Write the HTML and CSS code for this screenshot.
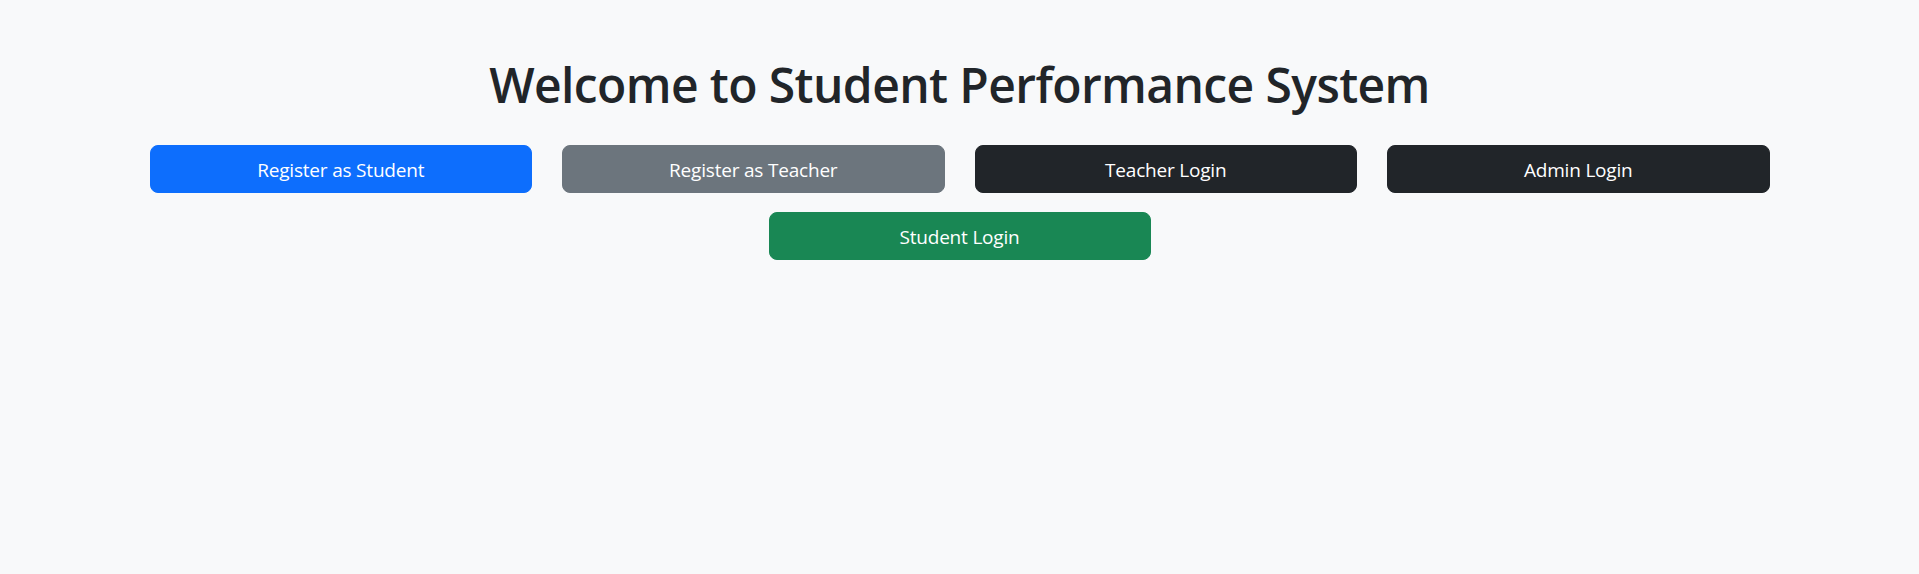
FILE: index.html
```html
<!DOCTYPE html>
<html lang="en">
<head>
<meta charset="utf-8">
<title>Student Performance System</title>
<link rel="stylesheet" href="styles.css">
</head>
<body>
<main class="container">
  <h1 class="title">Welcome to Student Performance System</h1>
  <div class="btn-row four">
    <a class="btn btn-primary" href="#">Register as Student</a>
    <a class="btn btn-secondary" href="#">Register as Teacher</a>
    <a class="btn btn-dark" href="#">Teacher Login</a>
    <a class="btn btn-dark" href="#">Admin Login</a>
  </div>
  <div class="btn-row single">
    <a class="btn btn-success" href="#">Student Login</a>
  </div>
</main>
</body>
</html>
```

FILE: styles.css
```css
* { box-sizing: border-box; }
html, body { margin: 0; padding: 0; }
body {
  background: #f8f9fa;
  color: #212529;
  font-family: "Open Sans", "Noto Sans", sans-serif;
  min-height: 574px;
}
.container {
  width: 1620px;
  margin: 0 auto;
  padding-top: 56px;
}
.title {
  margin: 0 0 31px;
  font-size: 48px;
  font-weight: 600;
  line-height: 1.2;
  text-align: center;
  letter-spacing: -0.6px;
  color: #212529;
}
.btn-row {
  display: grid;
  column-gap: 30px;
}
.btn-row.four { grid-template-columns: repeat(4, 1fr); }
.btn-row.single {
  grid-template-columns: 382px;
  justify-content: center;
  margin-top: 19px;
}
.btn {
  display: block;
  padding: 9px 16px 7px;
  border: 1px solid transparent;
  border-radius: 8px;
  font-size: 19px;
  line-height: 30px;
  text-align: center;
  text-decoration: none;
  color: #fff;
  letter-spacing: -0.2px;
}
.btn-primary { background: #0d6efd; border-color: #0d6efd; }
.btn-secondary { background: #6c757d; border-color: #6c757d; }
.btn-dark { background: #212529; border-color: #212529; }
.btn-success { background: #198754; border-color: #198754; }
```
